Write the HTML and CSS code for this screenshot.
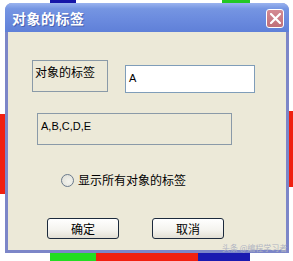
FILE: index.html
```html
<!DOCTYPE html>
<html lang="zh">
<head>
    <meta charset="UTF-8">
    <title>对象的标签</title>
    <link rel="stylesheet" href="styles.css">
</head>
<body>
    <div class="stage">
        <div class="bg bg-blue-top"></div>
        <div class="bg bg-green-top"></div>
        <div class="bg bg-red-left"></div>
        <div class="bg bg-red-right"></div>
        <div class="bg bg-green-bottom"></div>
        <div class="bg bg-red-bottom"></div>
        <div class="bg bg-blue-bottom"></div>

        <div class="window">
            <div class="titlebar">
                <span class="title">对象的标签</span>
                <span class="close">
                    <svg width="11" height="11" viewBox="0 0 11 11">
                        <path d="M1 1 L10 10 M10 1 L1 10" stroke="#fff" stroke-width="2.2" stroke-linecap="square"/>
                    </svg>
                </span>
            </div>
            <div class="client">
                <div class="row-top">
                    <div class="label-box">对象的标签</div>
                    <div class="edit">A</div>
                </div>
                <div class="group-box">A,B,C,D,E</div>
                <div class="radio-row">
                    <span class="radio"></span>
                    <span class="radio-text">显示所有对象的标签</span>
                </div>
                <div class="buttons">
                    <button class="btn">确定</button>
                    <button class="btn">取消</button>
                </div>
            </div>
        </div>

        <div class="watermark">头条 @编程学习者</div>
    </div>
</body>
</html>
```

FILE: styles.css
```css
body { margin: 0; background: #fff; font-family: "Noto Sans CJK SC", "Liberation Sans", sans-serif; font-size: 12px; }
.stage { position: relative; width: 293px; height: 261px; overflow: hidden; padding-top: 3px; box-sizing: border-box; }

.bg { position: absolute; }
.bg-blue-top { left: 50px; top: 0; width: 26px; height: 4px; background: #1616a8; }
.bg-green-top { left: 222px; top: 0; width: 28px; height: 4px; background: #22c822; }
.bg-red-left { left: 0; top: 114px; width: 6px; height: 80px; background: #f02010; }
.bg-red-right { left: 288px; top: 111px; width: 5px; height: 76px; background: #f02010; }
.bg-green-bottom { left: 50px; top: 253px; width: 46px; height: 8px; background: #22dd22; }
.bg-red-bottom { left: 96px; top: 253px; width: 104px; height: 8px; background: #f02010; }
.bg-blue-bottom { left: 198px; top: 253px; width: 52px; height: 8px; background: #1a1ab0; }

.window { position: relative; margin-left: 5px; width: 284px; height: 250px; background: #7c86c8; border-radius: 7px 7px 0 0; display: flex; flex-direction: column; }

.titlebar { height: 29px; display: flex; align-items: center; justify-content: space-between; padding: 0 5px 0 7px; border-radius: 7px 7px 0 0; background: linear-gradient(#9ab3ef, #7595e2 20%, #6a8ade 60%, #5f80d8); }
.title { color: #fff; font-weight: bold; font-size: 14px; letter-spacing: 0.5px; text-shadow: 1px 1px 0 #4a62b0; }
.close { width: 18px; height: 19px; box-sizing: border-box; border: 1px solid #fff; border-radius: 3px; background: linear-gradient(#d48a92, #c0707a); display: flex; align-items: center; justify-content: center; margin-top: 1px; }

.client { flex: 1; margin: 0 3px 3px; background: #ece9d8; padding-top: 28px; }

.row-top { display: flex; align-items: flex-start; padding-left: 24px; gap: 17px; }
.label-box { width: 76px; height: 32px; box-sizing: border-box; border: 1px solid #8a9aa8; padding: 3px 0 0 2px; line-height: 16px; color: #000; }
.edit { width: 130px; height: 28px; margin-top: 5px; box-sizing: border-box; border: 1px solid #7f9db9; background: #fff; padding: 5px 0 0 3px; font-family: "Liberation Sans", sans-serif; font-size: 11px; line-height: 14px; }

.group-box { width: 195px; height: 32px; margin: 20px 0 0 29px; box-sizing: border-box; border: 1px solid #8a9aa8; padding: 5px 0 0 3px; font-family: "Liberation Sans", sans-serif; font-size: 11px; line-height: 14px; }

.radio-row { display: flex; align-items: center; gap: 4px; margin: 28px 0 0 53px; height: 14px; }
.radio { width: 13px; height: 13px; box-sizing: border-box; border-radius: 50%; border: 1px solid #6a7a8c; background: radial-gradient(circle at 60% 60%, #f4f4ee, #dcdcd4); }
.radio-text { line-height: 14px; font-size: 12px; }

.buttons { display: flex; gap: 33px; padding-left: 39px; margin-top: 31px; }
.btn { width: 72px; height: 21px; box-sizing: border-box; border: 1px solid #1c2a3c; border-radius: 3px; background: linear-gradient(#ffffff, #f4f3ee 60%, #e2dfd4); font-family: "Noto Sans CJK SC", sans-serif; font-size: 12px; padding: 0; color: #000; }

.watermark { position: absolute; left: 222px; top: 243px; font-size: 8px; line-height: 10px; color: #b0b4c2; white-space: nowrap; }
```
